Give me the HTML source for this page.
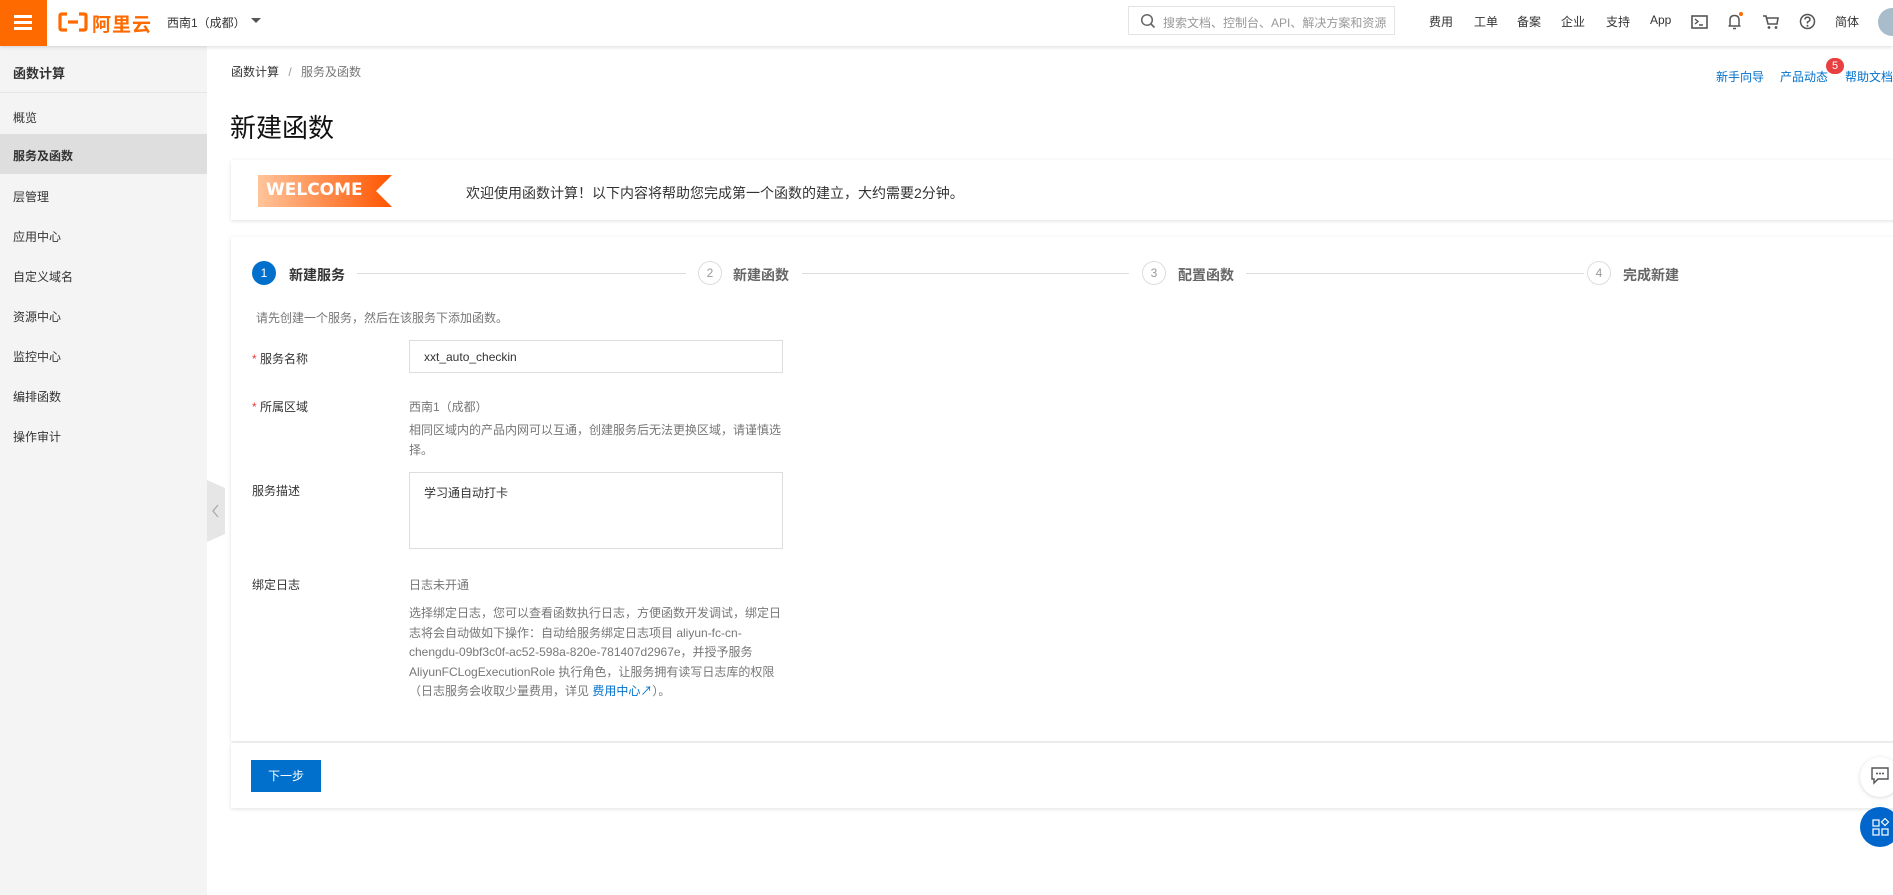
<!DOCTYPE html>
<html><head><meta charset="utf-8"><style>
*{margin:0;padding:0;box-sizing:border-box}
body{width:1893px;height:895px;overflow:hidden;background:#fff;font-family:"Liberation Sans","Noto Sans CJK SC",sans-serif;font-size:12px;color:#333;position:relative}
.a{position:absolute;white-space:nowrap}
#top{position:absolute;left:0;top:0;width:1893px;height:46px;background:#fff;box-shadow:0 1px 4px rgba(0,0,0,.15);z-index:5}
#side{position:absolute;left:0;top:46px;width:207px;height:849px;background:#f4f4f4}
.si{position:absolute;left:13px;font-size:12px;color:#333}
.card{position:absolute;background:#fff;box-shadow:0 1px 4px rgba(0,0,0,.12)}
.lab{font-size:12px;color:#333}
.gray{color:#777}
.circ{position:absolute;width:24px;height:24px;border-radius:50%;border:1px solid #ddd;color:#999;text-align:center;line-height:22px;font-size:12px;background:#fff}
.st{position:absolute;font-size:14px;font-weight:bold;color:#666}
.ln{position:absolute;height:1px;background:#ddd;top:273px}
.nav{position:absolute;top:13px;font-size:12px;color:#333}
</style></head><body>
<div id="top">
 <div class="a" style="left:0;top:0;width:47px;height:46px;background:#ff6a00"></div>
 <div class="a" style="left:14px;top:15px;width:18px;height:3px;background:#fff"></div>
 <div class="a" style="left:14px;top:21px;width:18px;height:3px;background:#fff"></div>
 <div class="a" style="left:14px;top:27px;width:18px;height:3px;background:#fff"></div>
 <svg class="a" style="left:58px;top:12px" width="30" height="20" viewBox="0 0 30 20"><path d="M9 2H4Q2 2 2 4V16Q2 18 4 18H9M21 2H26Q28 2 28 4V16Q28 18 26 18H21M10 10H20" stroke="#ff6a00" stroke-width="3.2" fill="none"/></svg>
 <div class="a" style="left:92px;top:10px;font-size:19px;font-weight:bold;color:#ff6a00;letter-spacing:1px">阿里云</div>
 <div class="a" style="left:167px;top:14px;font-size:12px;color:#333">西南1（成都）</div>
 <div class="a" style="left:251px;top:18px;width:0;height:0;border-left:5px solid transparent;border-right:5px solid transparent;border-top:5px solid #555"></div>
 <div class="a" style="left:1128px;top:6px;width:267px;height:29px;border:1px solid #e3e3e3"></div>
 <svg class="a" style="left:1140px;top:13px" width="16" height="16" viewBox="0 0 16 16"><circle cx="7" cy="7" r="5.3" stroke="#666" stroke-width="1.5" fill="none"/><path d="M11 11L14.5 14.5" stroke="#666" stroke-width="1.6"/></svg>
 <div class="a" style="left:1163px;top:14px;font-size:12px;color:#999">搜索文档、控制台、API、解决方案和资源</div>
 <div class="nav" style="left:1429px">费用</div>
 <div class="nav" style="left:1474px">工单</div>
 <div class="nav" style="left:1517px">备案</div>
 <div class="nav" style="left:1561px">企业</div>
 <div class="nav" style="left:1606px">支持</div>
 <div class="nav" style="left:1650px">App</div>
 <svg class="a" style="left:1691px;top:15px" width="17" height="14" viewBox="0 0 17 14"><rect x="1" y="1" width="15" height="12" stroke="#555" stroke-width="1.6" fill="none"/><path d="M4 4L7 6.5L4 9M8 10H12" stroke="#555" stroke-width="1.4" fill="none"/></svg>
 <svg class="a" style="left:1726px;top:12px" width="18" height="18" viewBox="0 0 18 18"><path d="M4 14V8Q4 3.5 8.5 3.5Q13 3.5 13 8V14ZM2.5 14H14.5M7 16.5H10" stroke="#555" stroke-width="1.5" fill="none"/><circle cx="15" cy="2" r="2" fill="#ff6a00"/></svg>
 <svg class="a" style="left:1762px;top:14px" width="18" height="16" viewBox="0 0 18 16"><path d="M1 2H4L6 10H15L16 4H5" stroke="#555" stroke-width="1.6" fill="none"/><circle cx="7" cy="13.5" r="1.4" fill="#555"/><circle cx="14" cy="13.5" r="1.4" fill="#555"/></svg>
 <svg class="a" style="left:1799px;top:13px" width="17" height="17" viewBox="0 0 17 17"><circle cx="8.5" cy="8.5" r="7" stroke="#555" stroke-width="1.5" fill="none"/><path d="M6 6.5Q6 4.3 8.5 4.3Q11 4.3 11 6.5Q11 8 8.5 9V10.5" stroke="#555" stroke-width="1.5" fill="none"/><circle cx="8.5" cy="12.8" r="1" fill="#555"/></svg>
 <div class="nav" style="left:1835px">简体</div>
 <div class="a" style="left:1878px;top:8px;width:28px;height:28px;border-radius:50%;background:#a9bccb"></div>
</div>
<div id="side">
 <div class="a" style="left:13px;top:17px;font-size:13px;font-weight:bold;color:#333">函数计算</div>
 <div class="a" style="left:0;top:46px;width:207px;height:1px;background:#e6e6e6"></div>
 <div class="si" style="top:63px">概览</div>
 <div class="a" style="left:0;top:88px;width:207px;height:40px;background:#dedede"></div>
 <div class="si" style="top:101px;font-weight:bold">服务及函数</div>
 <div class="si" style="top:142px">层管理</div>
 <div class="si" style="top:182px">应用中心</div>
 <div class="si" style="top:222px">自定义域名</div>
 <div class="si" style="top:262px">资源中心</div>
 <div class="si" style="top:302px">监控中心</div>
 <div class="si" style="top:342px">编排函数</div>
 <div class="si" style="top:382px">操作审计</div>
</div>
<svg class="a" style="left:207px;top:480px" width="19" height="62" viewBox="0 0 19 62"><path d="M0 0L18 8V54L0 62Z" fill="#e6e6e6"/><path d="M11 25L6 31L11 37" stroke="#aaa" stroke-width="1.3" fill="none"/></svg>

<div class="a" style="left:231px;top:63px;font-size:12px;color:#333">函数计算 <span style="color:#999;margin:0 6px">/</span> <span style="color:#777">服务及函数</span></div>
<div class="a" style="left:1716px;top:68px;font-size:12px;color:#0070cc">新手向导</div>
<div class="a" style="left:1780px;top:68px;font-size:12px;color:#0070cc">产品动态</div>
<div class="a" style="left:1826px;top:58px;width:18px;height:16px;border-radius:8px;background:#e84040;color:#fff;font-size:11px;text-align:center;line-height:16px">5</div>
<div class="a" style="left:1845px;top:68px;font-size:12px;color:#0070cc">帮助文档</div>
<div class="a" style="left:230px;top:108px;font-size:26px;color:#111">新建函数</div>

<div class="card" style="left:231px;top:160px;width:1670px;height:60px"></div>
<svg class="a" style="left:258px;top:175px" width="135" height="32" viewBox="0 0 135 32"><defs><linearGradient id="g" x1="0" x2="1"><stop offset="0" stop-color="#ffc49a"/><stop offset="1" stop-color="#ff5500"/></linearGradient></defs><path d="M0 0H134L118 16L134 32H0Z" fill="url(#g)"/></svg>
<div class="a" style="left:266px;top:180px;font-size:17px;font-weight:bold;color:#fff;font-family:'DejaVu Sans',sans-serif">WELCOME</div>
<div class="a" style="left:466px;top:183px;font-size:14px;color:#333">欢迎使用函数计算！以下内容将帮助您完成第一个函数的建立，大约需要2分钟。</div>

<div class="card" style="left:231px;top:237px;width:1670px;height:504px"></div>
<div class="card" style="left:231px;top:743px;width:1670px;height:65px"></div>
<div class="a" style="left:252px;top:261px;width:24px;height:24px;border-radius:50%;background:#0070cc;color:#fff;text-align:center;line-height:24px;font-size:12px">1</div>
<div class="st" style="left:289px;top:265px;color:#333">新建服务</div>
<div class="ln" style="left:357px;width:329px"></div>
<div class="circ" style="left:698px;top:261px">2</div>
<div class="st" style="left:733px;top:265px">新建函数</div>
<div class="ln" style="left:802px;width:327px"></div>
<div class="circ" style="left:1142px;top:261px">3</div>
<div class="st" style="left:1178px;top:265px">配置函数</div>
<div class="ln" style="left:1246px;width:338px"></div>
<div class="circ" style="left:1587px;top:261px">4</div>
<div class="st" style="left:1623px;top:265px">完成新建</div>

<div class="a gray" style="left:256px;top:309px">请先创建一个服务，然后在该服务下添加函数。</div>
<div class="a lab" style="left:252px;top:350px"><span style="color:#e84040">* </span>服务名称</div>
<div class="a" style="left:409px;top:340px;width:374px;height:33px;border:1px solid #ddd"></div>
<div class="a lab" style="left:424px;top:350px">xxt_auto_checkin</div>
<div class="a lab" style="left:252px;top:398px"><span style="color:#e84040">* </span>所属区域</div>
<div class="a gray" style="left:409px;top:398px">西南1（成都）</div>
<div class="a gray" style="left:409px;top:420px;line-height:20px;white-space:normal;width:380px">相同区域内的产品内网可以互通，创建服务后无法更换区域，请谨慎选择。</div>
<div class="a lab" style="left:252px;top:482px">服务描述</div>
<div class="a" style="left:409px;top:472px;width:374px;height:77px;border:1px solid #ddd"></div>
<div class="a lab" style="left:424px;top:484px">学习通自动打卡</div>
<div class="a lab" style="left:252px;top:576px">绑定日志</div>
<div class="a gray" style="left:409px;top:576px">日志未开通</div>
<div class="a gray" style="left:409px;top:604px;line-height:19.5px;white-space:normal;width:380px">选择绑定日志，您可以查看函数执行日志，方便函数开发调试，绑定日志将会自动做如下操作：自动给服务绑定日志项目 aliyun-fc-cn-chengdu-09bf3c0f-ac52-598a-820e-781407d2967e，并授予服务 AliyunFCLogExecutionRole 执行角色，让服务拥有读写日志库的权限（日志服务会收取少量费用，详见 <span style="color:#0070cc">费用中心↗</span>）。</div>

<div class="a" style="left:251px;top:760px;width:70px;height:32px;background:#0070cc;color:#fff;font-size:12px;text-align:center;line-height:32px">下一步</div>

<div class="a" style="left:1860px;top:757px;width:40px;height:40px;border-radius:50%;background:#fff;box-shadow:0 1px 4px rgba(0,0,0,.15)"></div>
<svg class="a" style="left:1871px;top:767px" width="18" height="18" viewBox="0 0 18 18"><path d="M1 1H17V12H7L3 16V12H1Z" stroke="#555" stroke-width="1.4" fill="none"/><circle cx="6" cy="6.5" r="1" fill="#555"/><circle cx="9" cy="6.5" r="1" fill="#555"/><circle cx="12" cy="6.5" r="1" fill="#555"/></svg>
<div class="a" style="left:1860px;top:807px;width:40px;height:40px;border-radius:50%;background:#0066cc"></div>
<svg class="a" style="left:1872px;top:818px" width="18" height="18" viewBox="0 0 18 18"><rect x="1" y="2" width="6" height="6" stroke="#fff" stroke-width="1.2" fill="none"/><rect x="1" y="11" width="6" height="6" stroke="#fff" stroke-width="1.2" fill="none"/><rect x="10" y="11" width="6" height="6" stroke="#fff" stroke-width="1.2" fill="none"/><path d="M13 0.5L16.5 4L13 7.5L9.5 4Z" stroke="#fff" stroke-width="1.2" fill="none"/></svg>
</body></html>
